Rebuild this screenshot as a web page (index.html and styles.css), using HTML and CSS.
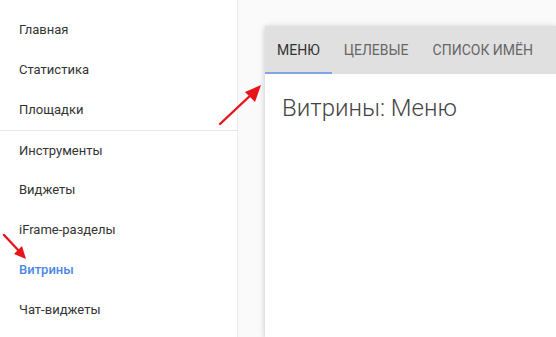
FILE: index.html
```html
<!DOCTYPE html>
<html lang="ru">

<head>
  <meta charset="UTF-8" />
  <meta name="viewport" content="width=device-width, initial-scale=1.0" />
  <title>Витрины</title>
  <link rel="stylesheet" href="styles.css">
</head>

<body>
  <aside class="sidebar">
    <ul class="menu">
      <li class="menu-item">Главная</li>
      <li class="menu-item">Статистика</li>
      <li class="menu-item">Площадки</li>
    </ul>
    <ul class="menu menu-second">
      <li class="menu-item">Инструменты</li>
      <li class="menu-item">Виджеты</li>
      <li class="menu-item">iFrame-разделы</li>
      <li class="menu-item active">Витрины</li>
      <li class="menu-item">Чат-виджеты</li>
    </ul>
  </aside>

  <main class="content">
    <div class="card">
      <div class="tabs">
        <div class="tab active">Меню</div>
        <div class="tab">Целевые</div>
        <div class="tab">Список имён</div>
      </div>
      <h1 class="title">Витрины: Меню</h1>
    </div>
  </main>

  <!-- annotation arrows -->
  <svg class="arrow arrow-tabs" width="50" height="48" viewBox="0 0 50 48">
    <line x1="3" y1="44" x2="36" y2="13" stroke="#e8131b" stroke-width="2.4" stroke-linecap="round" />
    <polygon points="44,5 28,12 38,22" fill="#e8131b" />
  </svg>
  <svg class="arrow arrow-menu" width="30" height="30" viewBox="0 0 30 30">
    <line x1="2" y1="3" x2="17" y2="19" stroke="#e8131b" stroke-width="2.4" stroke-linecap="round" />
    <polygon points="24,27 12,22 20,14" fill="#e8131b" />
  </svg>
</body>

</html>
```

FILE: styles.css
```css
body {
  margin: 0;
  height: 100vh;
  display: flex;
  overflow: hidden;
  font-family: Roboto, 'Liberation Sans', sans-serif;
  background: #fafafa;
}

.sidebar {
  width: 237px;
  flex: 0 0 237px;
  background: #fff;
  border-right: 1px solid #ececec;
  padding-top: 10px;
  box-sizing: content-box;
}

.menu {
  list-style: none;
  margin: 0;
  padding: 0;
}

.menu-second {
  border-top: 1px solid #e6e6e6;
}

.menu-item {
  height: 40px;
  line-height: 40px;
  padding-left: 19px;
  font-size: 13px;
  color: #333;
}

.menu-second .menu-item:first-child {
  height: 39px;
  line-height: 39px;
}

.menu-item.active {
  color: #4a86e8;
  font-weight: 500;
}

.content {
  flex: 1;
  padding: 26px 0 0 27px;
  display: flex;
  min-width: 0;
}

.card {
  flex: 1;
  background: #fff;
  box-shadow: 0 1px 6px rgba(0, 0, 0, 0.22);
}

.tabs {
  display: flex;
  height: 48px;
  background: #e0e0e0;
}

.tab {
  padding: 0 12px;
  line-height: 48px;
  font-size: 14px;
  text-transform: uppercase;
  color: #666;
  box-sizing: border-box;
}

.tab.active {
  color: #333;
  border-bottom: 2px solid #7ea6e6;
  line-height: 48px;
  height: 48px;
}

.title {
  margin: 20px 0 0 17px;
  font-size: 24px;
  font-weight: 300;
  color: #444;
}

.arrow {
  position: absolute;
}

.arrow-tabs {
  left: 217px;
  top: 80px;
}

.arrow-menu {
  left: 2px;
  top: 232px;
}
```
